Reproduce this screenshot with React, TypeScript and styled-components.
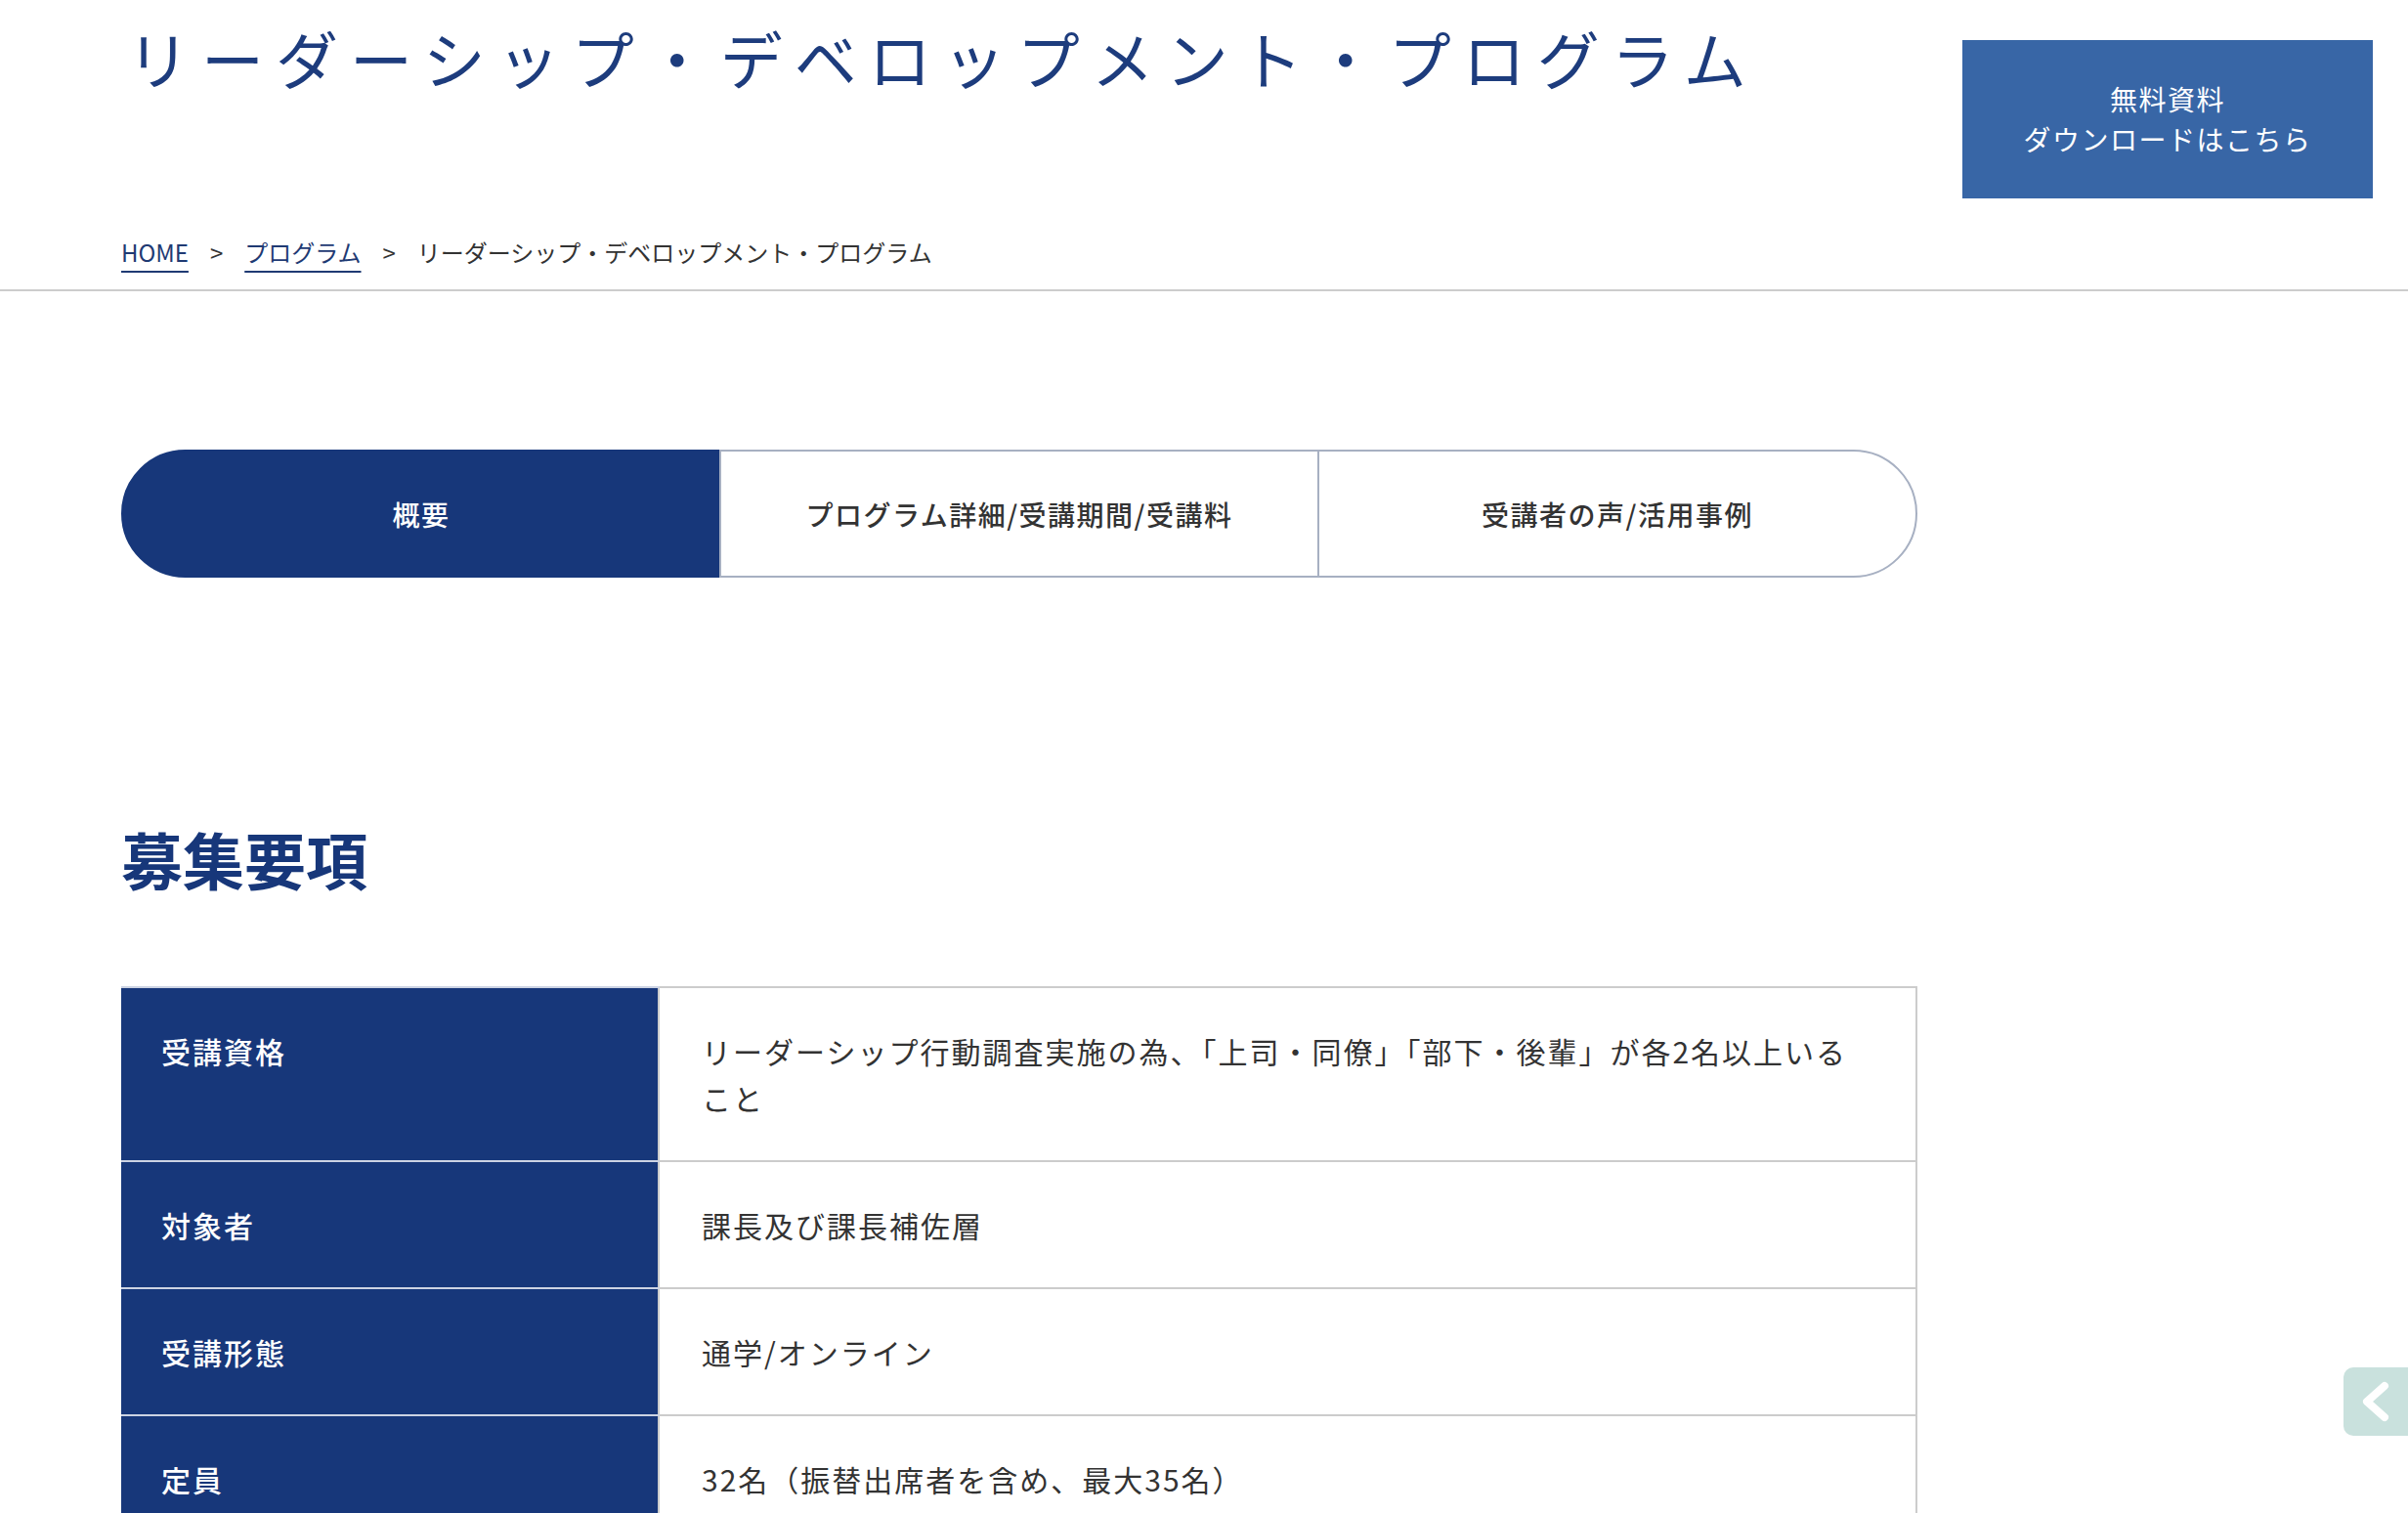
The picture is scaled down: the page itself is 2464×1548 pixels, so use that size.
import styled, { createGlobalStyle } from "styled-components";

const NAVY = "#17377a";

const GlobalStyle = createGlobalStyle`
  body {
    margin: 0;
    background: #ffffff;
    font-family: "Noto Sans CJK JP", "Noto Sans", sans-serif;
    color: #333333;
  }
`;

const Page = styled.div`
  width: 100%;
  min-height: 1548px;
  position: relative;
`;

const Header = styled.header`
  display: flex;
  flex-direction: row;
  justify-content: space-between;
  align-items: flex-start;
  padding: 0 36px 0 124px;
`;

const Title = styled.h1`
  margin: 20px 0 0 6px;
  font-size: 64px;
  line-height: 77px;
  font-weight: 400;
  letter-spacing: 12px;
  color: #1d3c7d;
  font-family: "Noto Sans CJK JP", serif;
`;

const DownloadButton = styled.a`
  margin-top: 41px;
  width: 420px;
  height: 162px;
  background: #3866a6;
  color: #ffffff;
  display: flex;
  flex-direction: column;
  align-items: center;
  justify-content: center;
  font-size: 28px;
  line-height: 41px;
  letter-spacing: 1.5px;
  text-decoration: none;
  text-align: center;
`;

const BreadcrumbBar = styled.nav`
  display: flex;
  flex-direction: row;
  align-items: center;
  padding: 37px 124px 20px;
  border-bottom: 2px solid #cccccc;
  font-size: 24px;
  line-height: 36px;
`;

const CrumbLink = styled.a`
  color: #1f3a73;
  text-decoration: underline;
  text-decoration-thickness: 2px;
  text-underline-offset: 9px;
`;

const CrumbSep = styled.span`
  padding: 0 22px;
  color: #333333;
`;

const CrumbCurrent = styled.span`
  color: #333333;
`;

const Main = styled.main`
  width: 1838px;
  margin-left: 124px;
`;

const TabList = styled.div`
  margin-top: 162px;
  display: flex;
  flex-direction: row;
  height: 131px;
`;

const Tab = styled.a<{ $active?: boolean; $pos: "first" | "mid" | "last" }>`
  flex: 1;
  display: flex;
  align-items: center;
  justify-content: center;
  box-sizing: border-box;
  font-size: 28px;
  font-weight: 500;
  letter-spacing: 1.5px;
  text-decoration: none;
  color: ${(p) => (p.$active ? "#ffffff" : "#333333")};
  background: ${(p) => (p.$active ? NAVY : "#ffffff")};
  border: 2px solid ${(p) => (p.$active ? NAVY : "#a7b0c2")};
  margin-left: ${(p) => (p.$pos === "first" ? "0" : "-2px")};
  border-radius: ${(p) =>
    p.$pos === "first" ? "66px 0 0 66px" : p.$pos === "last" ? "0 66px 66px 0" : "0"};
`;

const SectionHeading = styled.h2`
  margin: 243px 0 0;
  font-size: 63px;
  line-height: 87px;
  font-weight: 700;
  color: ${NAVY};
  font-family: "Noto Sans CJK JP", serif;
`;

const Table = styled.table`
  margin-top: 88px;
  width: 1838px;
  border-collapse: collapse;
  font-size: 30px;
  line-height: 48px;
  letter-spacing: 2px;
`;

const Th = styled.th`
  width: 550px;
  box-sizing: border-box;
  background: ${NAVY};
  color: #ffffff;
  font-weight: 500;
  text-align: left;
  vertical-align: top;
  padding: 40px 41px;
  border-top: 2px solid #ccd3e3;
  border-bottom: 2px solid #ccd3e3;
`;

const Td = styled.td`
  color: #333333;
  text-align: left;
  vertical-align: top;
  padding: 40px 43px;
  border: 2px solid #cccccc;
`;

const SideTab = styled.a`
  position: fixed;
  right: 0;
  top: 1399px;
  width: 66px;
  height: 70px;
  background: #c9e1dd;
  border-radius: 10px 0 0 10px;
  display: flex;
  align-items: center;
  justify-content: center;
`;

const rows: { label: string; value: React.ReactNode }[] = [
  {
    label: "受講資格",
    value: (
      <>
        リーダーシップ行動調査実施の為、「上司・同僚」「部下・後輩」が各2名以上いる
        <br />
        こと
      </>
    ),
  },
  { label: "対象者", value: "課長及び課長補佐層" },
  { label: "受講形態", value: "通学/オンライン" },
  { label: "定員", value: "32名（振替出席者を含め、最大35名）" },
];

export default function App() {
  return (
    <Page>
      <GlobalStyle />
      <Header>
        <Title>リーダーシップ・デベロップメント・プログラム</Title>
        <DownloadButton href="#">
          <span>無料資料</span>
          <span>ダウンロードはこちら</span>
        </DownloadButton>
      </Header>
      <BreadcrumbBar>
        <CrumbLink href="#">HOME</CrumbLink>
        <CrumbSep>&gt;</CrumbSep>
        <CrumbLink href="#">プログラム</CrumbLink>
        <CrumbSep>&gt;</CrumbSep>
        <CrumbCurrent>リーダーシップ・デベロップメント・プログラム</CrumbCurrent>
      </BreadcrumbBar>
      <Main>
        <TabList>
          <Tab href="#" $active $pos="first">概要</Tab>
          <Tab href="#" $pos="mid">プログラム詳細/受講期間/受講料</Tab>
          <Tab href="#" $pos="last">受講者の声/活用事例</Tab>
        </TabList>
        <SectionHeading>募集要項</SectionHeading>
        <Table>
          <tbody>
            {rows.map((r) => (
              <tr key={r.label}>
                <Th>{r.label}</Th>
                <Td>{r.value}</Td>
              </tr>
            ))}
          </tbody>
        </Table>
      </Main>
      <SideTab href="#">
        <svg width="34" height="44" viewBox="0 0 34 44">
          <path
            d="M26 6 L8 22 L26 38"
            fill="none"
            stroke="#ffffff"
            strokeWidth="8"
            strokeLinecap="round"
            strokeLinejoin="round"
          />
        </svg>
      </SideTab>
    </Page>
  );
}
